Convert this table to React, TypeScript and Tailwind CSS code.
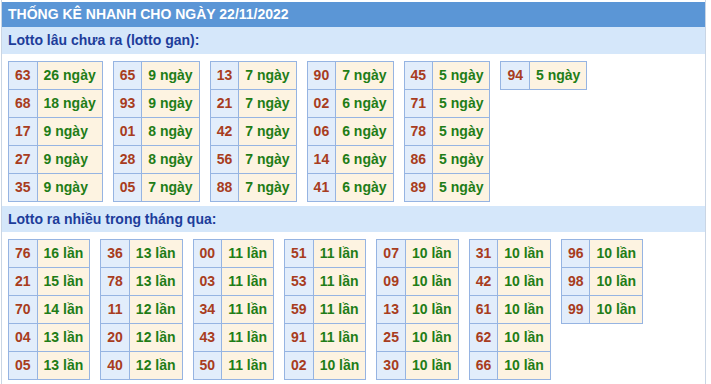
import React from "react"

type Item = [string, string]

const gan: Item[][] = [
  [["63", "26 ngày"], ["68", "18 ngày"], ["17", "9 ngày"], ["27", "9 ngày"], ["35", "9 ngày"]],
  [["65", "9 ngày"], ["93", "9 ngày"], ["01", "8 ngày"], ["28", "8 ngày"], ["05", "7 ngày"]],
  [["13", "7 ngày"], ["21", "7 ngày"], ["42", "7 ngày"], ["56", "7 ngày"], ["88", "7 ngày"]],
  [["90", "7 ngày"], ["02", "6 ngày"], ["06", "6 ngày"], ["14", "6 ngày"], ["41", "6 ngày"]],
  [["45", "5 ngày"], ["71", "5 ngày"], ["78", "5 ngày"], ["86", "5 ngày"], ["89", "5 ngày"]],
  [["94", "5 ngày"]],
]

const nhieu: Item[][] = [
  [["76", "16 lần"], ["21", "15 lần"], ["70", "14 lần"], ["04", "13 lần"], ["05", "13 lần"]],
  [["36", "13 lần"], ["78", "13 lần"], ["11", "12 lần"], ["20", "12 lần"], ["40", "12 lần"]],
  [["00", "11 lần"], ["03", "11 lần"], ["34", "11 lần"], ["43", "11 lần"], ["50", "11 lần"]],
  [["51", "11 lần"], ["53", "11 lần"], ["59", "11 lần"], ["91", "11 lần"], ["02", "10 lần"]],
  [["07", "10 lần"], ["09", "10 lần"], ["13", "10 lần"], ["25", "10 lần"], ["30", "10 lần"]],
  [["31", "10 lần"], ["42", "10 lần"], ["61", "10 lần"], ["62", "10 lần"], ["66", "10 lần"]],
  [["96", "10 lần"], ["98", "10 lần"], ["99", "10 lần"]],
]

function StatTable({ rows }: { rows: Item[] }) {
  return (
    <table className="border-collapse self-start">
      <tbody>
        {rows.map(([num, val]) => (
          <tr key={num}>
            <td className="border border-[#96b4e2] bg-[#e2edfb] h-[28px] px-[6px] text-center text-[#a83c20]">
              {num}
            </td>
            <td className="border border-[#96b4e2] bg-[#fdf3e1] h-[28px] px-[6px] text-[#1f7d17] whitespace-nowrap">
              {val}
            </td>
          </tr>
        ))}
      </tbody>
    </table>
  )
}

export default function App() {
  return (
    <div
      className="w-[711px] h-[384px] bg-white overflow-hidden"
      style={{ fontFamily: '"Liberation Sans", Arial, sans-serif' }}
    >
      <div className="ml-[1px] w-[705px] h-[384px] pt-[2px] border-x border-[#c9d5e4] text-[14px] font-bold">
        {/* Header */}
        <div className="h-[25px] bg-[#5b96d6] text-white px-[6px] flex items-center">
          THỐNG KÊ NHANH CHO NGÀY 22/11/2022
        </div>

        {/* Lotto gan */}
        <div className="h-[27px] bg-[#d5e7fa] text-[#1d3d9a] px-[6px] flex items-center">
          Lotto lâu chưa ra (lotto gan):
        </div>
        <div className="flex gap-[10px] px-[6px] pt-[7px] h-[152px]">
          {gan.map((rows, i) => (
            <StatTable key={i} rows={rows} />
          ))}
        </div>

        {/* Lotto ra nhieu */}
        <div className="h-[26px] bg-[#d5e7fa] text-[#1d3d9a] px-[6px] flex items-center">
          Lotto ra nhiều trong tháng qua:
        </div>
        <div className="flex gap-[10px] px-[6px] pt-[7px]">
          {nhieu.map((rows, i) => (
            <StatTable key={i} rows={rows} />
          ))}
        </div>
      </div>
    </div>
  )
}
